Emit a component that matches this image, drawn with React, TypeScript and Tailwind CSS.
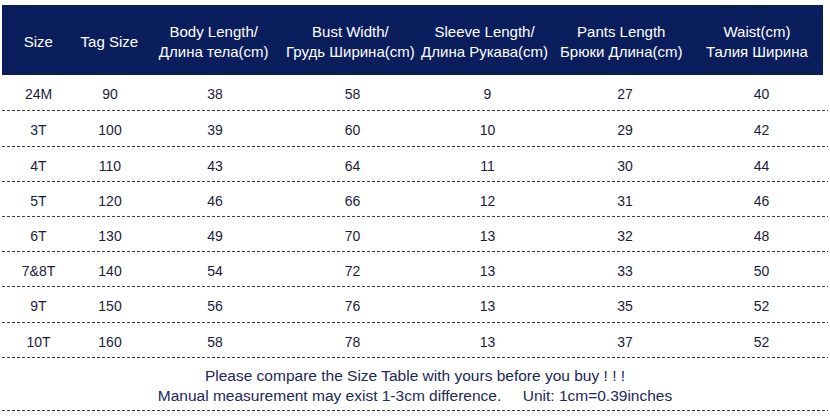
import React from "react";

const cols = ["w-[73px]", "w-[70px]", "w-[140px]", "w-[135px]", "w-[135px]", "w-[140px]", "w-[133px]"];

const headers: string[][] = [
  ["Size"],
  ["Tag Size"],
  ["Body Length/", "Длина тела(cm)"],
  ["Bust Width/", "Грудь Ширина(cm)"],
  ["Sleeve Length/", "Длина Рукава(cm)"],
  ["Pants Length", "Брюки Длина(cm)"],
  ["Waist(cm)", "Талия Ширина"],
];

const rows: { h: string; v: string[] }[] = [
  { h: "h-[35px]", v: ["24M", "90", "38", "58", "9", "27", "40"] },
  { h: "h-[35px]", v: ["3T", "100", "39", "60", "10", "29", "42"] },
  { h: "h-[34px]", v: ["4T", "110", "43", "64", "11", "30", "44"] },
  { h: "h-[34px]", v: ["5T", "120", "46", "66", "12", "31", "46"] },
  { h: "h-[34px]", v: ["6T", "130", "49", "70", "13", "32", "48"] },
  { h: "h-[34px]", v: ["7&8T", "140", "54", "72", "13", "33", "50"] },
  { h: "h-[35px]", v: ["9T", "150", "56", "76", "13", "35", "52"] },
  { h: "h-[34px]", v: ["10T", "160", "58", "78", "13", "37", "52"] },
];

function Dash() {
  return (
    <div className="h-px w-full bg-[repeating-linear-gradient(to_right,#3a3a3a_0_3px,transparent_3px_5px)]" />
  );
}

export default function App() {
  return (
    <div
      className="w-[830px] h-[419px] bg-white pt-[5px] pl-[2px] pr-[2px] overflow-hidden"
      style={{ fontFamily: '"Liberation Sans", Arial, sans-serif' }}
    >
      <div className="flex h-[70px] w-[821px] bg-[#0a1e5e] text-white text-[15px] leading-[20px] pt-[4px]">
        {headers.map((h, i) => (
          <div key={i} className={`${cols[i]} flex flex-col items-center justify-center text-center whitespace-nowrap`}>
            {h.map((l, j) => (
              <div key={j}>{l}</div>
            ))}
          </div>
        ))}
      </div>
      {rows.map((r, ri) => (
        <div key={ri}>
          <div className={`flex ${r.h} text-[14px] text-[#1c1c3a] pt-[4px]`}>
            {r.v.map((v, i) => (
              <div key={i} className={`${cols[i]} flex items-center justify-center`}>
                {v}
              </div>
            ))}
          </div>
          <Dash />
        </div>
      ))}
      <div className="h-[52px] flex flex-col items-center justify-center text-[15.5px] leading-[20px] text-[#20285a] pt-[3px]">
        <div>Please compare the Size Table with yours before you buy ! ! !</div>
        <div className="whitespace-pre">Manual measurement may exist 1-3cm difference.     Unit: 1cm=0.39inches</div>
      </div>
      <Dash />
    </div>
  );
}
